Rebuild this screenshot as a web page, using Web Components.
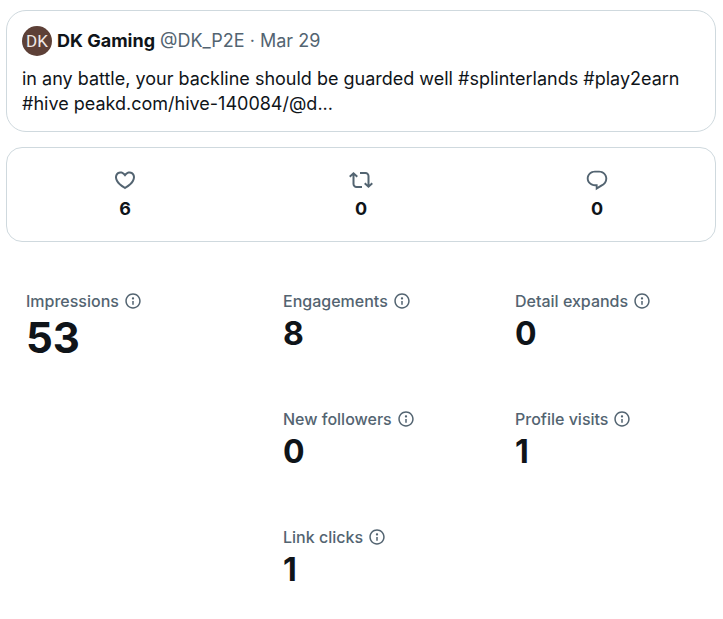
<!DOCTYPE html>
<html lang="en">
<head>
<meta charset="utf-8">
<title>Post analytics</title>
<style>
  body {
    margin: 0;
    padding: 10px 7px 32px 6px;
    background: #fff;
    color: #0f1419;
    font-family: Inter, Roboto, "Liberation Sans", sans-serif;
    --muted: #536471;
    --line: #cfd9de;
  }
</style>
</head>
<body>
<post-analytics></post-analytics>

<template id="post-analytics">
  <style>
    :host { display: block; }
    main { display: flex; flex-direction: column; gap: 15px; }
    .metrics {
      display: grid;
      grid-template-columns: 257fr 232fr 181fr;
      padding: 34px 20px 0;
      row-gap: 47px;
    }
    metric-item[main] { grid-row: span 3; }
    .second { grid-column: 2; }
  </style>
  <main>
    <post-card initials="DK">
      <span slot="name">DK Gaming</span>
      <span slot="meta">@DK_P2E · Mar 29</span>
      in any battle, your backline should be guarded well #splinterlands #play2earn #hive peakd.com/hive-140084/@d...
    </post-card>
    <reaction-bar>
      <reaction-count icon="like">6</reaction-count>
      <reaction-count icon="repost">0</reaction-count>
      <reaction-count icon="reply">0</reaction-count>
    </reaction-bar>
    <section class="metrics">
      <metric-item main label="Impressions">53</metric-item>
      <metric-item label="Engagements">8</metric-item>
      <metric-item label="Detail expands">0</metric-item>
      <metric-item label="New followers">0</metric-item>
      <metric-item label="Profile visits">1</metric-item>
      <metric-item class="second" label="Link clicks">1</metric-item>
    </section>
  </main>
</template>

<template id="post-card">
  <style>
    :host { display: block; border: 1px solid var(--line); border-radius: 20px; padding: 15px; }
    header { display: flex; align-items: center; gap: 5px; font-size: 18px; line-height: 30px; }
    .avatar {
      flex: none; width: 30px; height: 30px; border-radius: 50%;
      background: #5d4037; color: #f0e8e5; text-align: center;
      font: 17px/30px Roboto, sans-serif;
    }
    .name { font-weight: 700; }
    .meta { color: var(--muted); }
    p { margin: 10px 0 0; font-size: 18px; line-height: 25px; }
  </style>
  <article>
    <header>
      <span class="avatar"></span>
      <span class="name"><slot name="name"></slot></span>
      <span class="meta"><slot name="meta"></slot></span>
    </header>
    <p><slot></slot></p>
  </article>
</template>

<template id="reaction-bar">
  <style>
    :host {
      display: grid; grid-template-columns: repeat(3, 1fr);
      border: 1px solid var(--line); border-radius: 16px; padding: 20px 0;
    }
  </style>
  <slot></slot>
</template>

<template id="reaction-count">
  <style>
    :host { display: flex; flex-direction: column; align-items: center; gap: 5px; font-size: 18px; font-weight: 700; line-height: 24px; }
    svg { display: block; width: 24px; height: 24px; fill: var(--muted); }
  </style>
  <svg viewBox="0 0 24 24" role="img"><path/></svg>
  <span><slot></slot></span>
</template>

<template id="metric-item">
  <style>
    :host { display: block; }
    .label { display: flex; align-items: center; gap: 5px; color: var(--muted); font-size: 16px; font-weight: 500; line-height: 20px; }
    button { display: block; border: 0; padding: 0; background: none; color: inherit; cursor: pointer; }
    svg { display: block; width: 18px; height: 18px; fill: currentColor; }
    .value { font-size: 32px; font-weight: 700; line-height: 40px; margin-top: 3px; padding-bottom: 8px; }
    :host([main]) .value { font-size: 42px; line-height: 48px; }
  </style>
  <div class="label">
    <span class="text"></span>
    <button type="button">
      <svg viewBox="0 0 24 24" aria-hidden="true"><path d="M13.5 8.5c0 .83-.67 1.5-1.5 1.5s-1.5-.67-1.5-1.5S11.17 7 12 7s1.5.67 1.5 1.5zM13 17v-5h-2v5h2zm-1 5.25c5.66 0 10.25-4.59 10.25-10.25S17.66 1.75 12 1.75 1.75 6.34 1.75 12 6.34 22.25 12 22.25zM20.25 12c0 4.56-3.69 8.25-8.25 8.25S3.75 16.56 3.75 12 7.44 3.75 12 3.75s8.25 3.69 8.25 8.25z"/></svg>
    </button>
  </div>
  <div class="value"><slot></slot></div>
</template>

<script>
  const ICONS = {
    like: ['Likes', 'M16.697 5.5c-1.222-.06-2.679.51-3.89 2.16l-.805 1.09-.806-1.09C9.984 6.01 8.526 5.44 7.304 5.5c-1.243.07-2.349.78-2.91 1.91-.552 1.12-.633 2.78.479 4.82 1.074 1.97 3.257 4.27 7.129 6.61 3.87-2.34 6.052-4.64 7.126-6.61 1.111-2.04 1.03-3.7.477-4.82-.561-1.13-1.666-1.84-2.908-1.91zm4.187 7.69c-1.351 2.48-4.001 5.12-8.379 7.67l-.503.3-.504-.3c-4.379-2.55-7.029-5.19-8.382-7.67-1.36-2.5-1.41-4.86-.514-6.67.887-1.79 2.647-2.91 4.601-3.01 1.651-.09 3.368.56 4.798 2.01 1.429-1.45 3.146-2.1 4.796-2.01 1.954.1 3.714 1.22 4.601 3.01.896 1.81.846 4.17-.514 6.67z'],
    repost: ['Reposts', 'M4.5 3.88l4.432 4.14-1.364 1.46L5.5 7.55V16c0 1.1.896 2 2 2H13v2H7.5c-2.209 0-4-1.79-4-4V7.55L1.432 9.48.068 8.02 4.5 3.88zM16.5 6H11V4h5.5c2.209 0 4 1.79 4 4v8.45l2.068-1.93 1.364 1.46-4.432 4.14-4.432-4.14 1.364-1.46 2.068 1.93V8c0-1.1-.896-2-2-2z'],
    reply: ['Replies', 'M14.05 2.75h-4.1C5.4 2.75 1.75 6.2 1.75 10.6c0 4.1 3.6 7.6 8.3 7.6h.7v4.15l6.1-3.85c3.5-1.55 5.4-4.4 5.4-7.9 0-4.4-3.65-7.85-8.2-7.85zm1.75 14.1l-3.2 2v-2.5h-2.55c-3.65 0-6.4-2.6-6.4-5.75 0-3.4 2.8-6 6.3-6h4.1c3.5 0 6.3 2.6 6.3 6 0 2.75-1.6 5-4.55 6.25z']
  };

  class TemplateElement extends HTMLElement {
    constructor() {
      super();
      this.attachShadow({ mode: 'open' })
        .append(document.getElementById(this.localName).content.cloneNode(true));
    }
  }

  customElements.define('post-card', class extends TemplateElement {
    connectedCallback() {
      this.shadowRoot.querySelector('.avatar').textContent = this.getAttribute('initials');
    }
  });
  customElements.define('reaction-bar', class extends TemplateElement {});
  customElements.define('reaction-count', class extends TemplateElement {
    connectedCallback() {
      const [label, path] = ICONS[this.getAttribute('icon')];
      this.shadowRoot.querySelector('svg').setAttribute('aria-label', label);
      this.shadowRoot.querySelector('path').setAttribute('d', path);
    }
  });
  customElements.define('metric-item', class extends TemplateElement {
    connectedCallback() {
      const label = this.getAttribute('label');
      this.shadowRoot.querySelector('.text').textContent = label;
      this.shadowRoot.querySelector('button').setAttribute('aria-label', 'About ' + label);
    }
  });
  customElements.define('post-analytics', class extends TemplateElement {});
</script>
</body>
</html>
